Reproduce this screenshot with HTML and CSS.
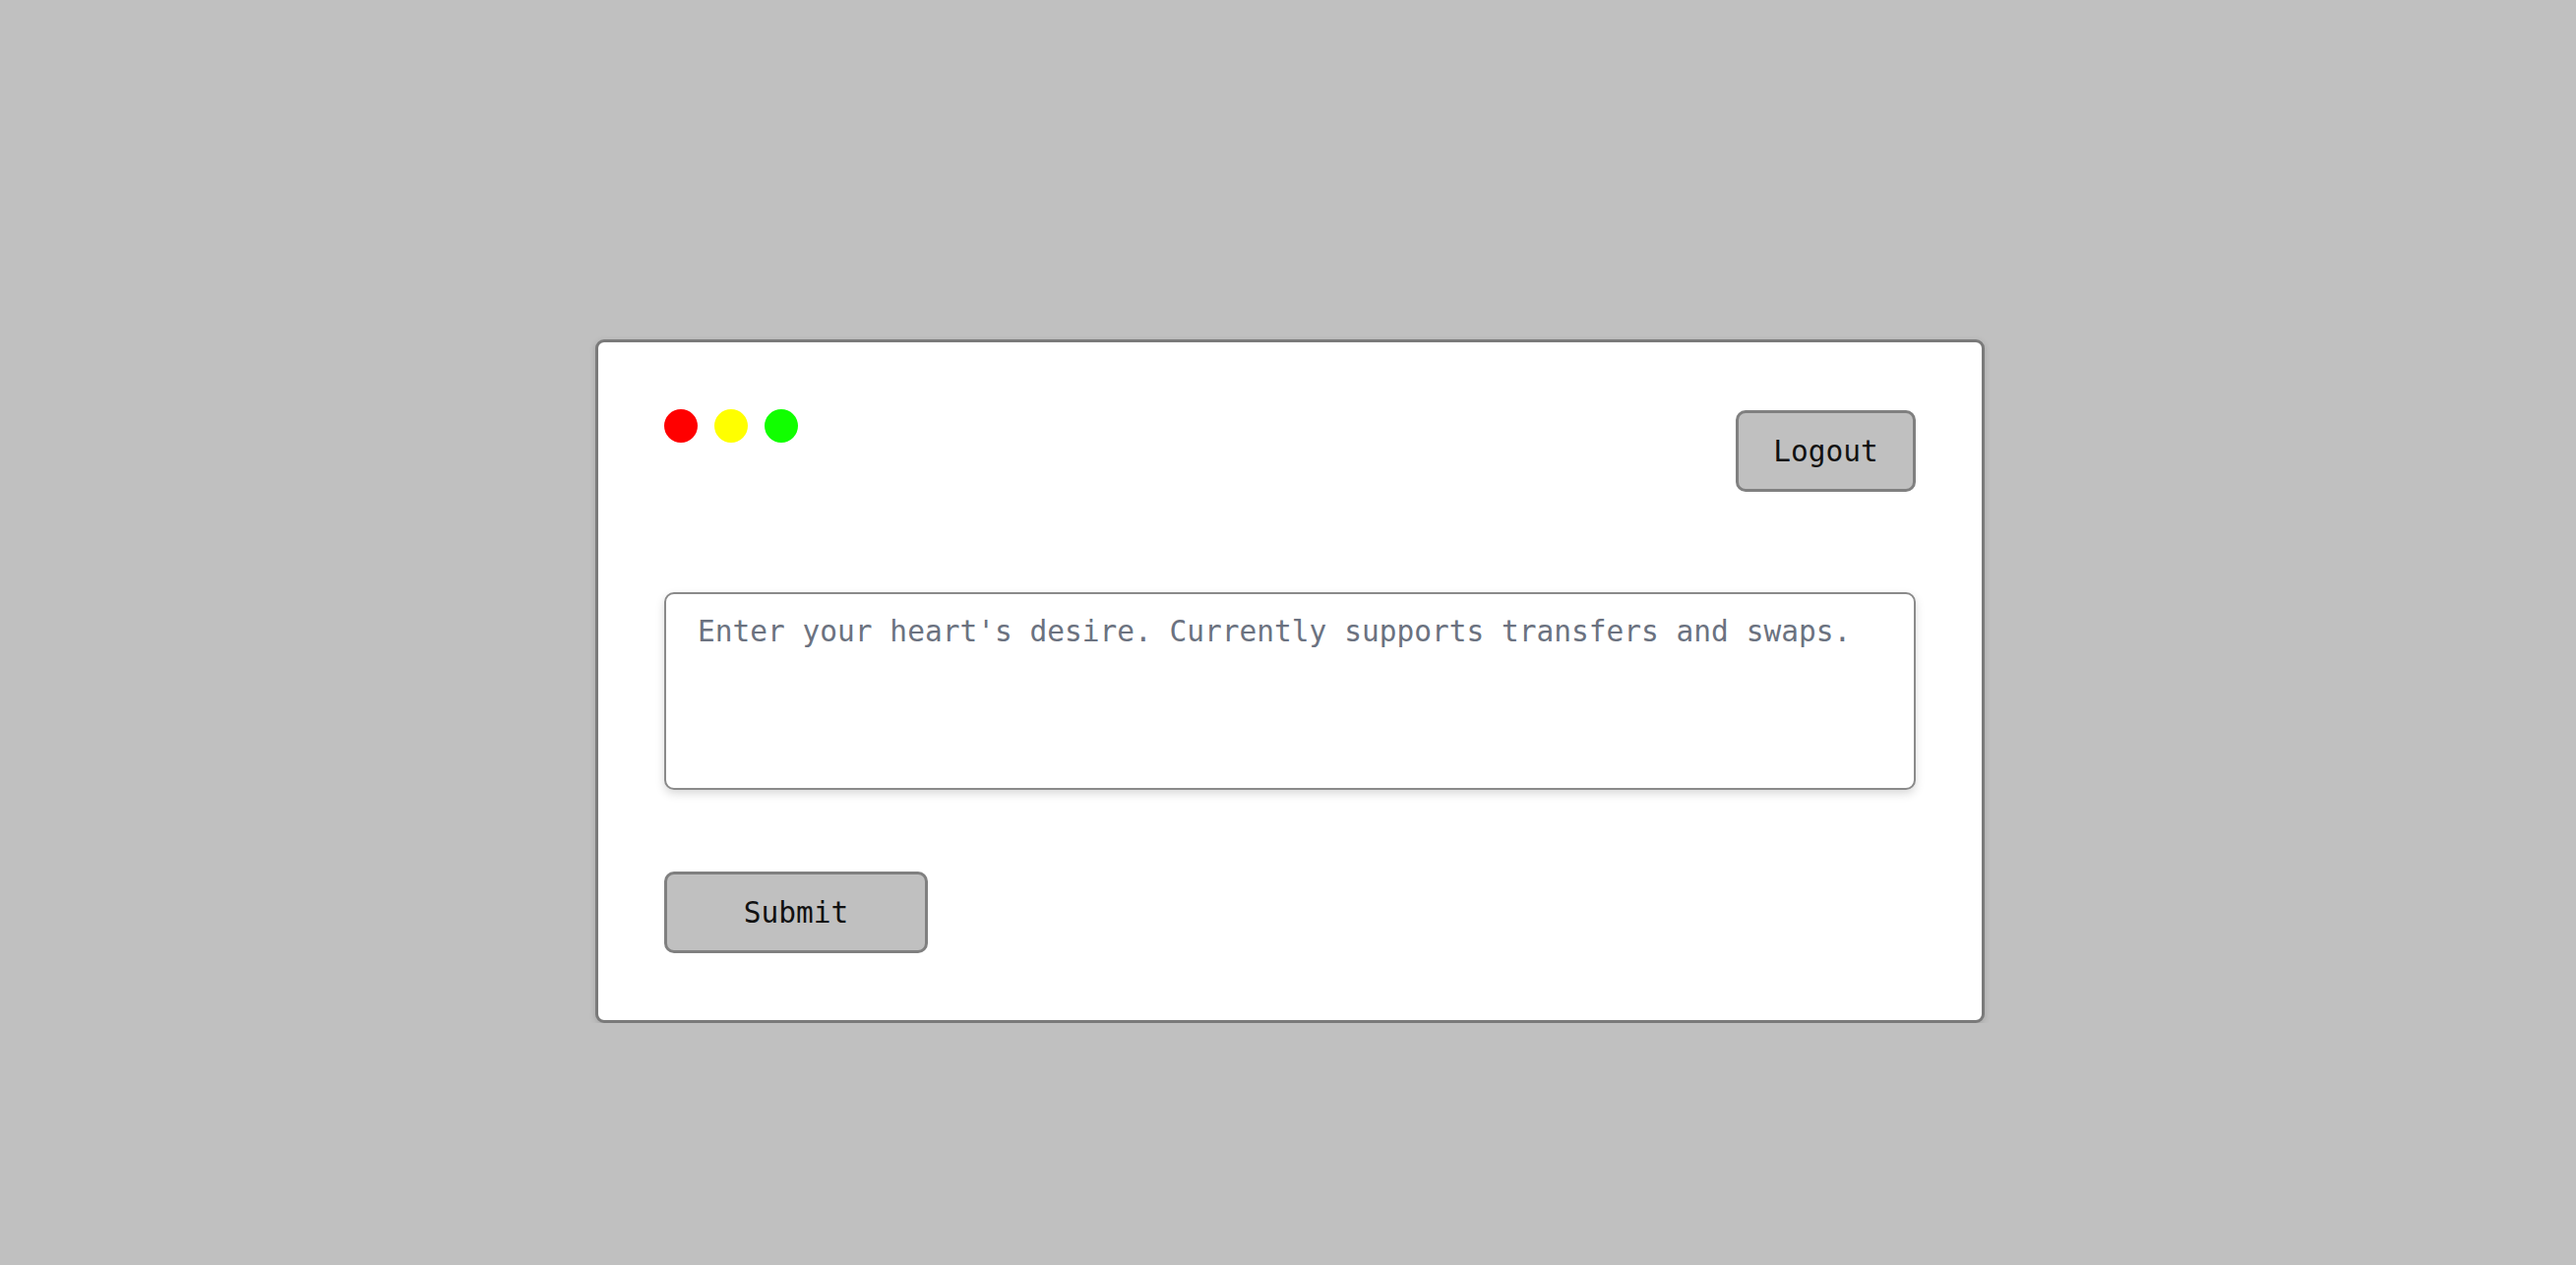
FILE: index.html
```html
<!DOCTYPE html>
<html lang="en">
<head>
    <meta charset="UTF-8">
    <meta name="viewport" content="width=device-width, initial-scale=1.0">
    <title>Wallet</title>
    <link rel="stylesheet" href="styles.css">
</head>
<body>
    <div class="window">
        <div class="window-top">
            <div class="dots">
                <span class="dot red"></span>
                <span class="dot yellow"></span>
                <span class="dot green"></span>
            </div>
            <button type="button" class="btn logout">Logout</button>
        </div>
        <form class="intent-form">
            <textarea class="intent" placeholder="Enter your heart's desire. Currently supports transfers and swaps."></textarea>
            <button type="button" class="btn submit">Submit</button>
        </form>
    </div>
</body>
</html>
```

FILE: styles.css
```css
body {
    margin: 0;
    background: #c0c0c0;
    display: flex;
    justify-content: center;
    padding: 345px 0 0 4px;
    font-family: "DejaVu Sans Mono", "Liberation Mono", monospace;
}

.window {
    width: 1412px;
    box-sizing: border-box;
    background: white;
    border: 3px solid #7a7a7a;
    border-radius: 9px;
    box-shadow: 0 2px 6px rgba(0, 0, 0, 0.15);
    padding: 68px 67px 68px 67px;
}

.window-top {
    display: flex;
    justify-content: space-between;
    align-items: flex-start;
}

.dots {
    display: flex;
    gap: 17px;
}

.dot {
    width: 34px;
    height: 34px;
    border-radius: 50%;
}

.red { background: #ff0000; }
.yellow { background: #ffff00; }
.green { background: #11ff00; }

.btn {
    font-family: inherit;
    font-size: 29.5px;
    color: #111;
    background: #c0c0c0;
    border: 3px solid #808080;
    border-radius: 10px;
    height: 83px;
    cursor: pointer;
}

.logout {
    width: 183px;
    margin-top: 1px;
}

.intent-form {
    display: flex;
    flex-direction: column;
    align-items: flex-start;
    margin-top: 102px;
}

.intent {
    width: 100%;
    height: 201px;
    box-sizing: border-box;
    resize: none;
    font-family: inherit;
    font-size: 29.5px;
    padding: 21px 32px;
    border: 2px solid #8a8a8a;
    border-radius: 10px;
    box-shadow: 0 4px 10px rgba(0, 0, 0, 0.15);
    outline: none;
}

.intent::placeholder {
    color: #6b7280;
}

.submit {
    width: 268px;
    margin-top: 83px;
}
```
